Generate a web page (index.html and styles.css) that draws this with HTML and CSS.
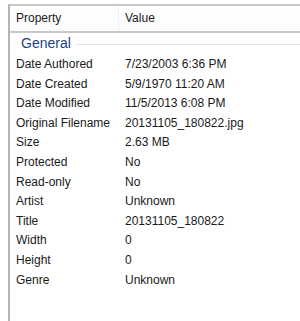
FILE: index.html
```html
<!DOCTYPE html>
<html lang="en">
<head>
    <meta charset="UTF-8">
    <title>Properties</title>
    <link rel="stylesheet" href="styles.css">
</head>
<body>
    <div class="panel">
        <div class="head">
            <div class="col-name">Property</div>
            <div class="col-value">Value</div>
        </div>
        <div class="group">
            <span class="group-title">General</span>
            <span class="group-line"></span>
        </div>
        <div class="rows">
            <div class="row"><span class="name">Date Authored</span><span class="value">7/23/2003 6:36 PM</span></div>
            <div class="row"><span class="name">Date Created</span><span class="value">5/9/1970 11:20 AM</span></div>
            <div class="row"><span class="name">Date Modified</span><span class="value">11/5/2013 6:08 PM</span></div>
            <div class="row"><span class="name">Original Filename</span><span class="value">20131105_180822.jpg</span></div>
            <div class="row"><span class="name">Size</span><span class="value">2.63 MB</span></div>
            <div class="row"><span class="name">Protected</span><span class="value">No</span></div>
            <div class="row"><span class="name">Read-only</span><span class="value">No</span></div>
            <div class="row"><span class="name">Artist</span><span class="value">Unknown</span></div>
            <div class="row"><span class="name">Title</span><span class="value">20131105_180822</span></div>
            <div class="row"><span class="name">Width</span><span class="value">0</span></div>
            <div class="row"><span class="name">Height</span><span class="value">0</span></div>
            <div class="row"><span class="name">Genre</span><span class="value">Unknown</span></div>
        </div>
    </div>
</body>
</html>
```

FILE: styles.css
```css
body {
    margin: 0;
    background: #fff;
    font-family: 'Liberation Sans', Arial, sans-serif;
    font-size: 12px;
    color: #1a1a1a;
}
.panel {
    margin: 4px 0 0 8px;
    height: 317px;
    border-left: 2px solid #b4b4b4;
    border-top: 2px solid #c8c8c8;
    box-sizing: border-box;
}
.head {
    display: flex;
    height: 25px;
    background: linear-gradient(#ffffff, #fbfcfd);
    border-bottom: 2px solid #c9c9c9;
}
.col-name {
    width: 102px;
    padding-left: 6px;
    line-height: 24px;
    border-right: 1px solid #eef0f2;
}
.col-value {
    padding-left: 6px;
    line-height: 24px;
}
.group {
    display: flex;
    align-items: center;
    height: 22px;
    padding-left: 11px;
    padding-bottom: 2px;
    box-sizing: border-box;
}
.group-title {
    color: #1e3f91;
    font-size: 14px;
}
.group-line {
    flex: 1;
    height: 1px;
    margin-left: 5px;
    margin-top: 2px;
    background: #e2e4e8;
}
.rows {
    padding-top: 0;
}
.row {
    display: flex;
    height: 19.6px;
    line-height: 19.6px;
}
.name {
    width: 109px;
    padding-left: 6px;
}
```
